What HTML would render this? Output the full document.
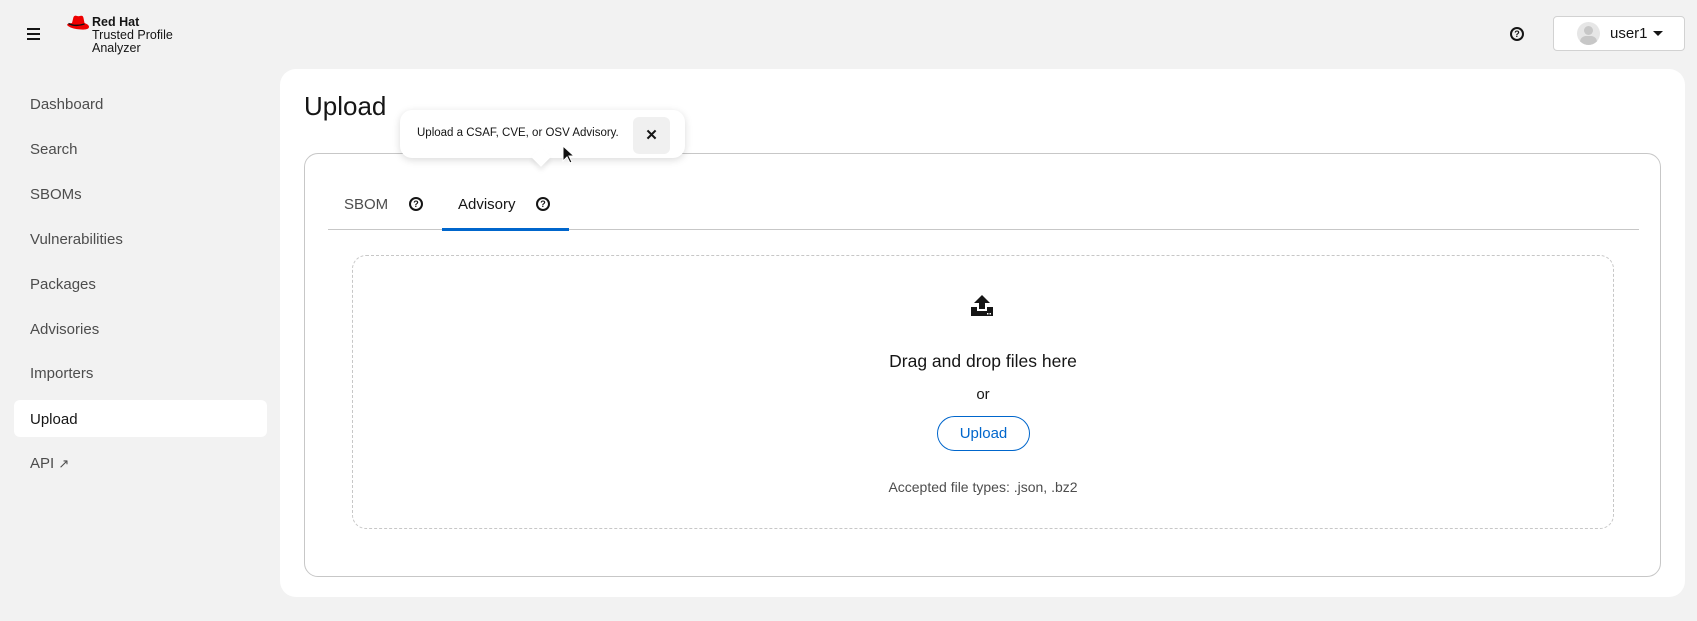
<!DOCTYPE html>
<html><head><meta charset="utf-8"><style>
*{box-sizing:border-box;margin:0;padding:0}
body{width:1697px;height:621px;background:#f2f2f2;font-family:"Liberation Sans",sans-serif;color:#151515;position:relative;overflow:hidden}
.abs{position:absolute}
.nav{position:absolute;left:30px;font-size:15px;color:#4d4d4d}
.q{position:absolute;width:14px;height:14px;border:2px solid #151515;border-radius:50%;font-size:9px;font-weight:bold;text-align:center;line-height:10px}
</style></head><body>
<div class="abs" style="left:27px;top:28px;width:13px">
<div style="height:2px;background:#151515;margin-bottom:3px"></div><div style="height:2px;background:#151515;margin-bottom:3px"></div><div style="height:2px;background:#151515"></div></div>
<svg class="abs" style="left:66px;top:15px" width="24" height="18" viewBox="0 0 24 18"><path d="M6 8 L7.5 2 Q8.5 0 11 1 Q13 1.5 15 0.8 Q17 0.5 17.5 3 L18.5 8 Q23 9.5 23 12 Q23 15 15 14.5 Q6 14 2 11 Q0 9.5 2.5 8.5 Z" fill="#e00"/><path d="M2.5 8.5 Q9 12 18.5 9" stroke="#111" stroke-width="1.4" fill="none"/></svg>
<div class="abs" style="left:92px;top:16px;font-size:12.5px;line-height:13px"><b>Red Hat</b><br>Trusted Profile<br>Analyzer</div>
<div class="nav" style="top:96px">Dashboard</div>
<div class="nav" style="top:141px">Search</div>
<div class="nav" style="top:186px">SBOMs</div>
<div class="nav" style="top:231px">Vulnerabilities</div>
<div class="nav" style="top:276px">Packages</div>
<div class="nav" style="top:321px">Advisories</div>
<div class="nav" style="top:365px">Importers</div>
<div class="abs" style="left:14px;top:400px;width:253px;height:37px;background:#fff;border-radius:6px"></div>
<div class="nav" style="top:411px;color:#151515">Upload</div>
<div class="nav" style="top:455px">API <span style="font-size:13px">&#x2197;</span></div>
<div class="q" style="left:1510px;top:27px">?</div>
<div class="abs" style="left:1553px;top:16px;width:132px;height:35px;background:#fff;border:1px solid #d2d2d2;border-radius:4px"></div>
<div class="abs" style="left:1577px;top:22px;width:23px;height:23px;border-radius:50%;background:#e6e6e6;overflow:hidden"><div style="position:absolute;left:7px;top:4px;width:9px;height:9px;border-radius:50%;background:#c7c7c7"></div><div style="position:absolute;left:3px;top:14px;width:17px;height:12px;border-radius:8px;background:#c7c7c7"></div></div>
<div class="abs" style="left:1610px;top:25px;font-size:15px">user1</div>
<div class="abs" style="left:1653px;top:31px;border:5px solid transparent;border-top:5px solid #151515"></div>
<div class="abs" style="left:280px;top:69px;width:1405px;height:528px;background:#fff;border-radius:16px"></div>
<div class="abs" style="left:304px;top:91px;font-size:26px">Upload</div>
<div class="abs" style="left:304px;top:153px;width:1357px;height:424px;border:1px solid #c7c7c7;border-radius:14px"></div>
<div class="abs" style="left:328px;top:229px;width:1311px;height:1px;background:#c7c7c7"></div>
<div class="abs" style="left:344px;top:196px;font-size:15px;color:#4d4d4d">SBOM</div>
<div class="q" style="left:409px;top:197px">?</div>
<div class="abs" style="left:458px;top:196px;font-size:15px">Advisory</div>
<div class="q" style="left:536px;top:197px">?</div>
<div class="abs" style="left:442px;top:228px;width:127px;height:3px;background:#0066cc"></div>
<div class="abs" style="left:352px;top:255px;width:1262px;height:274px;border:1px dashed #c7c7c7;border-radius:14px"></div>
<svg class="abs" style="left:970px;top:294px" width="24" height="24" viewBox="0 0 24 24"><path d="M12 1 L20 9 L15 9 L15 15 L9 15 L9 9 L4 9 Z" fill="#151515"/><path d="M1 13 L7 13 L7 17 L17 17 L17 13 L23 13 L23 22 L1 22 Z" fill="#151515"/><rect x="17" y="19" width="1.5" height="1.5" fill="#fff"/><rect x="19.5" y="19" width="1.5" height="1.5" fill="#fff"/></svg>
<div class="abs" style="left:352px;width:1262px;top:351px;text-align:center;font-size:17.5px;font-weight:500">Drag and drop files here</div>
<div class="abs" style="left:352px;width:1262px;top:386px;text-align:center;font-size:15px">or</div>
<div class="abs" style="left:937px;top:416px;width:93px;height:35px;border:1px solid #0066cc;border-radius:18px;color:#0066cc;font-size:15px;text-align:center;line-height:33px">Upload</div>
<div class="abs" style="left:352px;width:1262px;top:479px;text-align:center;font-size:14px;color:#4d4d4d">Accepted file types: .json, .bz2</div>
<div class="abs" style="left:400px;top:110px;width:285px;height:48px;background:#fff;border-radius:12px;box-shadow:0 2px 8px rgba(0,0,0,.15)"></div>
<div class="abs" style="left:534px;top:150px;width:14px;height:14px;background:#fff;transform:rotate(45deg);box-shadow:3px 3px 5px rgba(0,0,0,.08)"></div>
<div class="abs" style="left:417px;top:127px;font-size:11.5px">Upload a CSAF, CVE, or OSV Advisory.</div>
<div class="abs" style="left:633px;top:117px;width:37px;height:37px;background:#f0f0f0;border-radius:6px;text-align:center;line-height:37px;font-size:15px;font-weight:bold">&#x2715;</div>
<svg class="abs" style="left:562px;top:145px" width="14" height="20" viewBox="0 0 14 20"><path d="M1 1 L1 16 L5 12 L8 18 L10 17 L7 11 L12 11 Z" fill="#111" stroke="#fff" stroke-width="1"/></svg>
</body></html>
